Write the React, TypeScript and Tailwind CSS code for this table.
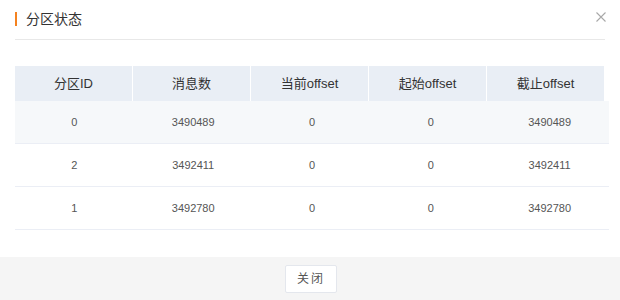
const columns = ['分区ID', '消息数', '当前offset', '起始offset', '截止offset'];

const rows = [
  ['0', '3490489', '0', '0', '3490489'],
  ['2', '3492411', '0', '0', '3492411'],
  ['1', '3492780', '0', '0', '3492780'],
];

export default function App() {
  return (
    <div
      className="w-[620px] h-[300px] bg-white flex flex-col overflow-hidden"
      style={{ fontFamily: '"Liberation Sans", Arial, "Noto Sans CJK SC", sans-serif' }}
    >
      {/* Header */}
      <div className="mx-[15px] h-[40px] border-b border-[#e8e8e8] flex items-start justify-between">
        <div className="flex items-center gap-[9px] mt-[12px]">
          <span className="w-[2px] h-[14px] bg-[#f5821f]" />
          <span className="text-[14px] leading-[14px] text-[#333]">分区状态</span>
        </div>
        <button className="mt-[12px] -mr-px text-[#a8a8a8]">
          <svg width="10" height="10" viewBox="0 0 10 10" fill="none" stroke="currentColor" strokeWidth="1.1">
            <path d="M0.5 0.5 L9.5 9.5 M9.5 0.5 L0.5 9.5" />
          </svg>
        </button>
      </div>

      {/* Table */}
      <div className="mx-[15px] mt-[26px] flex-1">
        <div className="w-[589px] h-[35px] grid grid-cols-5 gap-px">
          {columns.map((c) => (
            <div key={c} className="bg-[#e9eef5] flex items-center justify-center text-[13px] text-[#333]">
              {c}
            </div>
          ))}
        </div>
        <div className="w-[594px]">
          {rows.map((r, i) => (
            <div
              key={i}
              className={`grid grid-cols-5 h-[43px] border-b border-[#ebeef5] ${i === 0 ? 'bg-[#f6f8fa]' : 'bg-white'}`}
            >
              {r.map((v, j) => (
                <div key={j} className="flex items-center justify-center text-[11px] text-[#555]">
                  {v}
                </div>
              ))}
            </div>
          ))}
        </div>
      </div>

      {/* Footer */}
      <div className="h-[43px] bg-[#f5f5f5] flex items-center justify-center">
        <button className="w-[52px] h-[28px] ml-[2px] bg-white border border-[#e4e7ed] rounded-[2px] text-[12px] text-[#555] tracking-[2px]">
          关闭
        </button>
      </div>
    </div>
  );
}
